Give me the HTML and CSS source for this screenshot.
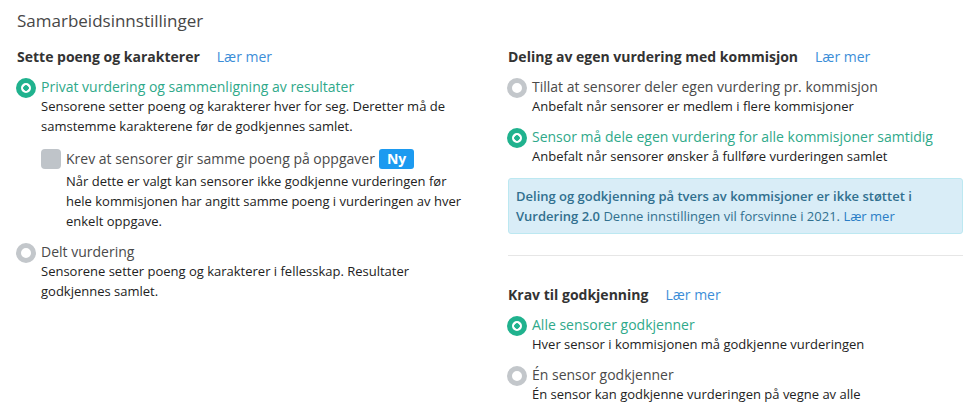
FILE: index.html
```html
<!DOCTYPE html>
<html lang="nb">
<head>
    <meta charset="UTF-8">
    <meta name="viewport" content="width=device-width, initial-scale=1.0">
    <title>Samarbeidsinnstillinger</title>
    <link rel="stylesheet" href="styles.css">
</head>
<body>
    <div class="page">
        <h1 class="page-title">Samarbeidsinnstillinger</h1>

        <div class="columns">
            <div class="column">
                <div class="section-head">
                    <h2>Sette poeng og karakterer</h2>
                    <a href="#" class="link">Lær mer</a>
                </div>

                <div class="option checked">
                    <div class="option-row">
                        <span class="radio on"></span>
                        <span class="option-label">Privat vurdering og sammenligning av resultater</span>
                    </div>
                    <div class="option-desc">Sensorene setter poeng og karakterer hver for seg. Deretter må de samstemme karakterene før de godkjennes samlet.</div>

                    <div class="sub-option">
                        <div class="option-row">
                            <span class="checkbox"></span>
                            <span class="option-label">Krev at sensorer gir samme poeng på oppgaver</span>
                            <span class="badge">Ny</span>
                        </div>
                        <div class="option-desc">Når dette er valgt kan sensorer ikke godkjenne vurderingen før hele kommisjonen har angitt samme poeng i vurderingen av hver enkelt oppgave.</div>
                    </div>
                </div>

                <div class="option">
                    <div class="option-row">
                        <span class="radio"></span>
                        <span class="option-label">Delt vurdering</span>
                    </div>
                    <div class="option-desc">Sensorene setter poeng og karakterer i fellesskap. Resultater godkjennes samlet.</div>
                </div>
            </div>

            <div class="column">
                <div class="section-head">
                    <h2>Deling av egen vurdering med kommisjon</h2>
                    <a href="#" class="link">Lær mer</a>
                </div>

                <div class="option">
                    <div class="option-row">
                        <span class="radio"></span>
                        <span class="option-label">Tillat at sensorer deler egen vurdering pr. kommisjon</span>
                    </div>
                    <div class="option-desc">Anbefalt når sensorer er medlem i flere kommisjoner</div>
                </div>

                <div class="option checked">
                    <div class="option-row">
                        <span class="radio on"></span>
                        <span class="option-label">Sensor må dele egen vurdering for alle kommisjoner samtidig</span>
                    </div>
                    <div class="option-desc">Anbefalt når sensorer ønsker å fullføre vurderingen samlet</div>
                </div>

                <div class="info-box">
                    <strong>Deling og godkjenning på tvers av kommisjoner er ikke støttet i Vurdering 2.0</strong>
                    Denne innstillingen vil forsvinne i 2021. <a href="#" class="link">Lær mer</a>
                </div>

                <hr class="divider">

                <div class="section-head">
                    <h2>Krav til godkjenning</h2>
                    <a href="#" class="link">Lær mer</a>
                </div>

                <div class="option checked">
                    <div class="option-row">
                        <span class="radio on"></span>
                        <span class="option-label">Alle sensorer godkjenner</span>
                    </div>
                    <div class="option-desc">Hver sensor i kommisjonen må godkjenne vurderingen</div>
                </div>

                <div class="option">
                    <div class="option-row">
                        <span class="radio"></span>
                        <span class="option-label">Én sensor godkjenner</span>
                    </div>
                    <div class="option-desc">Én sensor kan godkjenne vurderingen på vegne av alle</div>
                </div>
            </div>
        </div>
    </div>
</body>
</html>
```

FILE: styles.css
```css
body {
    margin: 0;
    font-family: "Open Sans", Arial, sans-serif;
    background-color: #fff;
    color: #222;
}
.page {
    padding: 9px 8px 0 17px;
}
.page-title {
    margin: 0;
    font-size: 17px;
    font-weight: 400;
    line-height: 24px;
    color: #474747;
}
.columns {
    display: grid;
    grid-template-columns: 448px 1fr;
    column-gap: 43px;
    margin-top: 14px;
}
.section-head {
    display: flex;
    align-items: baseline;
    margin-bottom: 11px;
}
.section-head h2 {
    margin: 0;
    font-size: 14px;
    font-weight: 700;
    line-height: 20px;
    color: #333;
}
.link {
    color: #3c8ed8;
    text-decoration: none;
}
.section-head .link {
    margin-left: 17px;
    font-size: 14px;
    line-height: 20px;
}
.option {
    margin-bottom: 12px;
}
.option-row {
    display: flex;
    align-items: center;
}
.option-label {
    font-size: 14px;
    line-height: 18px;
    color: #4a4a4a;
}
.option.checked > .option-row .option-label {
    color: #2fa98a;
}
.option-desc {
    margin-left: 24px;
    font-size: 13px;
    line-height: 20px;
    color: #222;
}
.radio {
    flex: none;
    box-sizing: border-box;
    width: 20px;
    height: 20px;
    margin: 0 5px -2px -1px;
    border: 5px solid #c3c7cb;
    border-radius: 50%;
    background-color: #fff;
}
.radio.on {
    border-color: #20b28e;
    background: radial-gradient(circle, #20b28e 0 2.5px, #fff 3px);
}
.sub-option {
    margin: 13px 0 0 24px;
}
.checkbox {
    flex: none;
    width: 20px;
    height: 20px;
    margin: -1px 5px -1px 0;
    border-radius: 4px;
    background-color: #bfc4c9;
}
.badge {
    margin-left: 4px;
    padding: 0 8px;
    font-size: 14px;
    font-weight: 700;
    line-height: 20px;
    color: #fff;
    background-color: #1c9af0;
    border-radius: 3px;
}
.sub-option .option-desc {
    margin: 2px 0 0 25px;
}
.info-box {
    margin-top: 7px;
    padding: 7px 7px 7px;
    font-size: 13px;
    line-height: 20px;
    color: #31708f;
    background-color: #d9edf7;
    border: 1px solid #bce8f1;
    border-radius: 3px;
}
.info-box strong {
    font-weight: 600;
}
.info-box .link {
    color: #2a7dc6;
}
.divider {
    margin: 21px 0 29px;
    border: none;
    border-top: 1px solid #e6e6e6;
}
.divider ~ .option + .option {
    margin-top: 2px;
}
```
